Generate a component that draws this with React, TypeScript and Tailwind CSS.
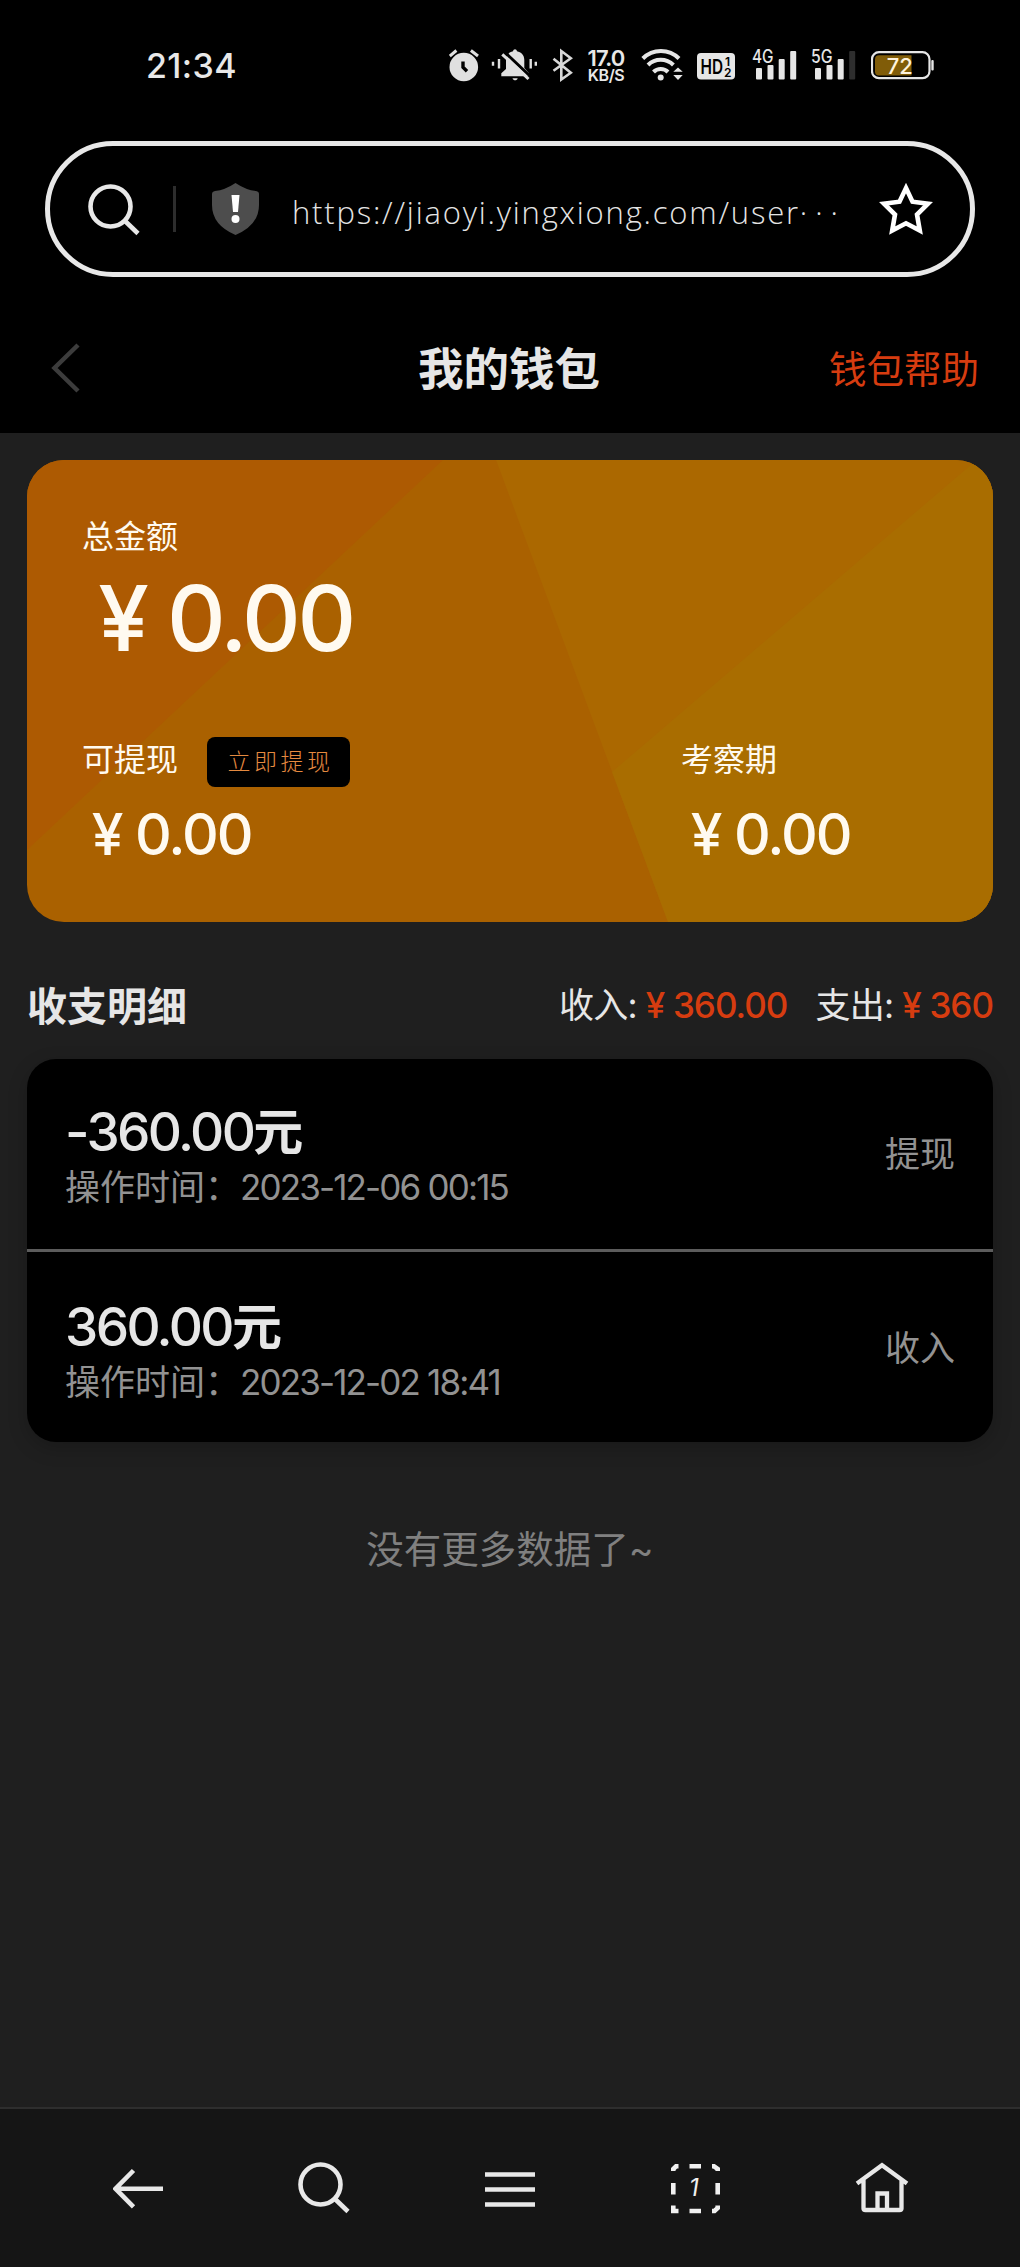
import { ReactNode } from 'react';

const records = [
  { id: 1, amount: '-360.00', time: '2023-12-06 00:15', type: '提现' },
  { id: 2, amount: '360.00', time: '2023-12-02 18:41', type: '收入' },
];

function SearchIcon({ className }: { className?: string }) {
  return (
    <svg className={className} width="52" height="52" viewBox="0 0 52 52" fill="none" stroke="#e8e8e8" strokeWidth="4.6">
      <circle cx="22.5" cy="22.5" r="20" />
      <path d="M36.5 36.5 L50 49.5" />
    </svg>
  );
}

function Signal({ label, bars }: { label: string; bars: number }) {
  const x = [4, 15.5, 26.7, 38.2];
  const y = [20, 17, 11, 3];
  return (
    <svg className="overflow-visible" width="45" height="36" viewBox="0 0 45 36" fill="#e6e6e6">
      <text x="0" y="15" fontSize="18" fontWeight="500" textLength="21.5" lengthAdjust="spacingAndGlyphs">
        {label}
      </text>
      {x.map((left, i) => (
        <rect key={i} x={left} y={y[i]} width="6" height={31.5 - y[i]} rx="1" fill={i < bars ? '#e6e6e6' : '#2e2e2e'} />
      ))}
    </svg>
  );
}

function StatusBar() {
  return (
    <div className="flex h-[132px] items-center text-[#e8e8e8]">
      <div className="ml-[146px] w-[303px] text-[34px] font-medium leading-none tracking-[0.4px]">21:34</div>

      {/* Alarm */}
      <svg width="30" height="36" viewBox="0 0 30 36" fill="none" stroke="#e0e0e0" strokeWidth="3">
        <circle cx="14.8" cy="19" r="14.3" fill="#e0e0e0" stroke="none" />
        <path d="M0.8 8 L7.4 2.5 M21.9 2.5 L29 8" />
        <path d="M14 13.5 V19.3 L18 23.3" stroke="#000" strokeWidth="3.4" />
      </svg>

      {/* Muted bell */}
      <svg className="ml-3" width="47" height="36" viewBox="0 0 47 36" fill="#e0e0e0">
        <path d="M2 13.7 V17.7 M8 11 V20.5 M39.7 11 V20.5 M44.8 13.7 V17.7" stroke="#e0e0e0" strokeWidth="2.4" />
        <path d="M10.3 28.3 V25.3 L15 21 V12 C15 7 18 4.3 22 3.3 C22.3 0.6 25.7 0.6 26 3.3 C30 4.3 33.3 7 33.3 12 V20 L38 25.3 V28.3 Z" />
        <path d="M21.5 30.3 H26.7 C26 33 22.3 33 21.5 30.3 Z" />
        <path d="M13.6 4 L40 29" stroke="#000" strokeWidth="3" />
        <path d="M11.3 6.3 L37.5 31" stroke="#e0e0e0" strokeWidth="3" />
      </svg>

      {/* Bluetooth */}
      <svg className="ml-3.5" width="21" height="36" viewBox="0 0 21 36" fill="none" stroke="#d8d8d8" strokeWidth="2.6">
        <path d="M1.5 10.8 L18.8 24.8 L9.3 31.5 V3 L18.8 10.2 L1.5 22.7" />
      </svg>

      <div className="ml-[13px] mr-0.5 flex w-[40px] flex-col items-center font-semibold">
        <span className="text-[22px] leading-[18px] tracking-[-0.8px]">17.0</span>
        <span className="text-[16px] leading-[16px] tracking-[-0.4px]">KB/S</span>
      </div>

      {/* Wi-Fi */}
      <svg className="ml-[13px]" width="43" height="36" viewBox="0 0 43 36" fill="none" stroke="#e6e6e6" strokeWidth="4">
        <path d="M1.8 10.5 A25.5 25.5 0 0 1 38 10.5 M7 17 A18 18 0 0 1 32.4 17 M12.5 24 A10 10 0 0 1 27 24" />
        <circle cx="19.7" cy="29.5" r="3" fill="#e6e6e6" stroke="none" />
        <path d="M32.3 23.7 L37 19.4 L41.7 23.7 Z M32.3 27 H41.7 L37 32 Z" fill="#e6e6e6" stroke="none" />
      </svg>

      {/* HD 1/2 */}
      <svg className="ml-[13px]" width="38" height="36" viewBox="0 0 38 36" fontWeight="600">
        <rect y="5" width="38" height="26.5" rx="4" fill="#e6e6e6" />
        <text x="3.5" y="25.5" fontSize="20.5" textLength="22.5" lengthAdjust="spacingAndGlyphs">HD</text>
        <text x="28" y="17.5" fontSize="12">1</text>
        <text x="27" y="28.5" fontSize="12">2</text>
      </svg>

      <div className="ml-[17px] flex gap-3.5">
        <Signal label="4G" bars={4} />
        <Signal label="5G" bars={3} />
      </div>

      {/* Battery */}
      <svg className="ml-[15px]" width="64" height="36" viewBox="0 0 64 36">
        <rect x="1" y="4.2" width="57.5" height="26" rx="7" fill="none" stroke="#e6e6e6" strokeWidth="2.2" />
        <path d="M36 7.2 H8 Q4 7.2 4 11.2 V23.5 Q4 27.5 8 27.5 H40.5 V7.2 Z" fill="#805c08" />
        <rect x="60.3" y="12" width="2.4" height="10.5" rx="1" fill="#e6e6e6" />
        <text x="28.7" y="25.5" fontSize="22" fontWeight="500" textAnchor="middle" fill="#fff3dd">72</text>
      </svg>
    </div>
  );
}

function AddressBar() {
  return (
    <div className="mx-[45px] mt-[9px] flex h-[136px] items-center rounded-full border-[5px] border-[#e8e8e8]">
      <SearchIcon className="ml-[38px] mt-0.5" />
      <div className="ml-[33px] h-[46px] w-[3px] bg-[#2d2d2d]" />
      <svg className="ml-[36px]" width="47" height="52" viewBox="0 0 47 52">
        <path d="M23.5 0 Q34 7 44 8 Q47 8.5 47 11 V22 Q47 42 23.5 52 Q0 42 0 22 V11 Q0 8.5 3 8 Q13 7 23.5 0 Z" fill="#4d4d4d" />
        <path d="M19.5 12 H27.5 L26 29 H21 Z" fill="#fff" />
        <circle cx="23.5" cy="36" r="4" fill="#fff" />
      </svg>
      <div className="ml-[33px] mt-1.5 w-[586px] whitespace-nowrap font-['Open_Sans'] text-[31px] font-light leading-none tracking-[1.8px] text-[#e4e4e4]">
        https://jiaoyi.yingxiong.com/user<span className="tracking-[8px]">···</span>
      </div>
      <svg width="56" height="54" viewBox="0 0 56 54" fill="none" stroke="#fff" strokeWidth="4.6">
        <path d="M28 6 L34.5 19.7 L50 21.7 L39 32.5 L41.8 48.5 L28 41.3 L14.2 48.5 L17 32.5 L6 21.7 L21.5 19.7 Z" />
      </svg>
    </div>
  );
}

function Header() {
  return (
    <div className="mt-[26px] flex h-[130px] items-start px-10 pt-[35px]">
      <svg className="ml-[11px] mt-[5px]" width="29" height="50" viewBox="0 0 29 50" fill="none" stroke="#3c3c3c" strokeWidth="4.5">
        <path d="M27 2 L3.5 25 L27 48" />
      </svg>
      <h1 className="ml-[338px] w-[411px] pt-0.5 text-[45.5px] font-bold leading-[60px] text-[#e6e6e6]">我的钱包</h1>
      <a className="whitespace-nowrap pt-px text-[37.5px] leading-[62px] text-[#d63c10]">钱包帮助</a>
    </div>
  );
}

function Money({ value }: { value: string }) {
  return (
    <div className="flex text-[57px] font-medium leading-[60px]">
      <span className="w-[51px] text-center">¥</span>
      <span className="ml-0.5 tracking-[-2px]">{value}</span>
    </div>
  );
}

function WalletCard() {
  return (
    <div className="relative mx-[27px] mt-[27px] h-[462px] overflow-hidden rounded-[37px] bg-[#aa6100] text-[#fffaf0]">
      {/* Facets behind the balance */}
      <svg className="absolute inset-0" width="966" height="462" viewBox="0 0 966 462">
        <path d="M0 0 H416 L0 390 Z" fill="#ad5a02" />
        <path d="M469 0 H966 V462 H641 Z" fill="#ab6800" />
        <path d="M966 -14 V462 H641 L585 312 Z" fill="#a96d00" />
      </svg>
      <div className="relative px-[55px] pt-[57px]">
        <div className="text-[32px] leading-[40px]">总金额</div>
        <div className="mt-[6px] flex text-[91px] font-medium leading-[110px]">
          <span className="w-[83px] text-center">¥</span>
          <span className="ml-0.5 tracking-[-3.2px]">0.00</span>
        </div>
        <div className="mt-[64px] flex">
          <div className="w-[599px]">
            <div className="flex h-[50px] items-center">
              <span className="-mt-1 text-[32px]">可提现</span>
              <button className="ml-[29px] h-[50px] w-[143px] rounded-lg bg-black pl-1 text-[23px] font-light tracking-[3.5px] text-[#e58a40]">
                立即提现
              </button>
            </div>
            <div className="mt-[18px]">
              <Money value="0.00" />
            </div>
          </div>
          <div>
            <div className="flex h-[50px] items-center pb-1 text-[32px]">考察期</div>
            <div className="mt-[18px]">
              <Money value="0.00" />
            </div>
          </div>
        </div>
      </div>
    </div>
  );
}

function Total({ label, value }: { label: ReactNode; value: string }) {
  return (
    <div className="flex items-center">
      <span className="tracking-[-0.7px]">{label}:</span>
      <span className="flex font-medium tracking-[-1px] text-[#d63c10]">
        <span className="w-[36px] text-center">¥</span>
        {value}
      </span>
    </div>
  );
}

function TabBar() {
  return (
    <div className="flex h-[160px] items-start justify-between border-t-2 border-[#2e2e2e] bg-[#151515] pl-[113px] pr-[111px] pt-[53px]">
      <svg width="50" height="52" viewBox="0 0 50 52" fill="none" stroke="#e8e8e8" strokeWidth="4.6">
        <path d="M50 26.700 H3 M20.500 8.500 L2.500 26.700 L20.500 44.900" />
      </svg>
      <SearchIcon />
      <svg width="50" height="52" viewBox="0 0 50 52" stroke="#e8e8e8" strokeWidth="4.6">
        <path d="M0 12.500 H50 M0 27.500 H50 M0 42.500 H50" />
      </svg>
      <svg width="50" height="52" viewBox="0 0 50 52" fill="none" stroke="#f0f0f0" strokeWidth="4.6">
        <path d="M3.300 9 V7 L6 4.300 H8.500 M19.500 4.300 H31 M42 4.300 H44 L47.700 7 V9 M47.700 21 V32.500 M47.700 43.500 V46 L44.500 49 H42 M31 49 H19.500 M8.500 49 H3.300 V43.500 M3.300 32.500 V21" />
        <text x="24" y="34" fontSize="24" fontStyle="italic" textAnchor="middle" fill="#f0f0f0" stroke="none">
          1
        </text>
      </svg>
      <svg width="54" height="52" viewBox="0 0 54 52" fill="none" stroke="#e8e8e8" strokeWidth="4.3">
        <path d="M2 21.500 L27 3.200 L52 21.500 M8.500 18 V46.500 Q8.500 48 10.500 48 H44.500 Q46.500 48 46.500 46.500 V18 M22.500 48 V31.500 H32 V48" />
      </svg>
    </div>
  );
}

export default function App() {
  return (
    <div className="flex h-[2267px] w-[1020px] flex-col bg-[#1f1f1f] font-['Inter','Noto_Sans_CJK_SC',sans-serif]">
      <div className="h-[433px] bg-black">
        <StatusBar />
        <AddressBar />
        <Header />
      </div>

      <div className="flex-1">
        <WalletCard />

        {/* Summary */}
        <div className="mx-[27px] mt-[54px] flex h-[60px] items-center text-[#e6e6e6]">
          <h2 className="flex-1 pt-px text-[40px] font-bold">收支明细</h2>
          <div className="-mt-0.5 flex gap-7 text-[35px]">
            <Total label="收入" value="360.00" />
            <Total label="支出" value="360" />
          </div>
        </div>

        {/* Records */}
        <div className="mx-[27px] mt-[23px] h-[383px] divide-y-[3px] divide-[#5c5c5c] overflow-hidden rounded-[29px] bg-black shadow-[0_6px_20px_rgba(0,0,0,0.2)]">
          {records.map((item) => (
            <div key={item.id} className="flex h-[193px] items-center justify-between px-[38px]">
              <div className="pt-[7px]">
                <div className="flex items-center text-[53px] font-medium leading-[60px] tracking-[-2.6px] text-[#e6e6e6]">
                  {item.amount}
                  <span className="text-[50px] font-bold">元</span>
                </div>
                <div className="flex text-[35px] leading-[51px] text-[#929292]">
                  <span className="w-[175px] whitespace-nowrap">操作时间：</span>
                  <span className="tracking-[-1.85px]">{item.time}</span>
                </div>
              </div>
              <div className="text-[35px] text-[#929292]">{item.type}</div>
            </div>
          ))}
        </div>

        <div className="mt-[80px] text-center text-[37.5px] leading-[56px] text-[#808080]">没有更多数据了~</div>
      </div>

      <TabBar />
    </div>
  );
}
